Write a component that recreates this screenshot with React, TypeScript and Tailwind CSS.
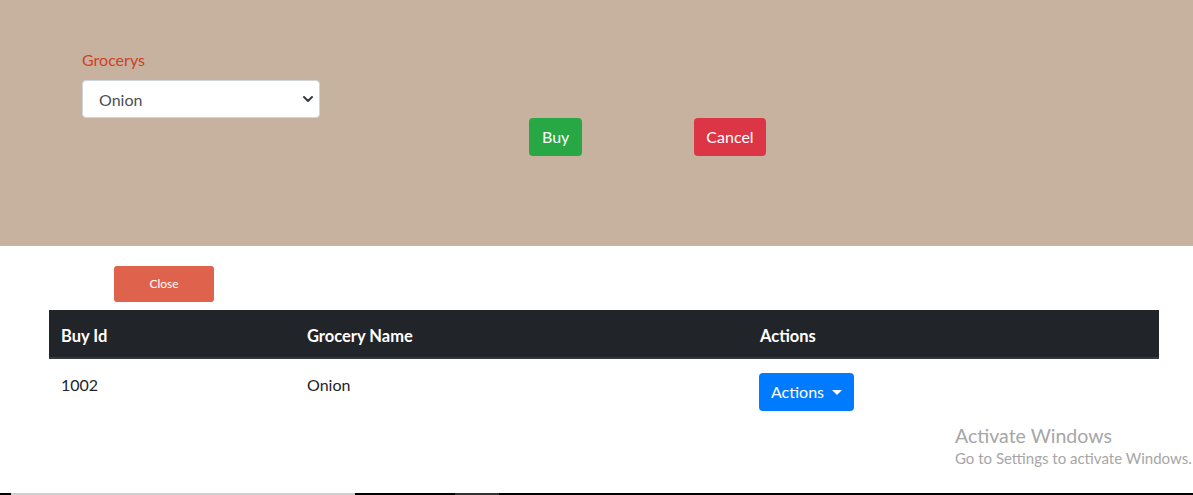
import { ChevronDown } from "lucide-react"

const App = () => {
  return (
    <div className="relative h-[495px] overflow-hidden bg-white font-['Lato','Noto_Sans',sans-serif] text-[#212529]">
      <div className="h-[246px] bg-[#c6b29f] pl-[82px] pt-[48px] flex items-start">
        <div className="w-[238px] flex flex-col">
          <label className="text-[16px] leading-6 text-[#cf4029]">Grocerys</label>
          <div className="relative mt-[8px]">
            <select className="appearance-none w-full h-[38px] rounded border border-[#ced4da] bg-white pl-4 pt-[2px] text-[16px] text-[#495057] outline-none">
              <option>Onion</option>
            </select>
            <ChevronDown size={16} strokeWidth={3} className="absolute right-[4px] top-[11px] text-[#343a40] pointer-events-none" />
          </div>
        </div>
        <div className="ml-[209px] mt-[70px] flex gap-[112px]">
          <button className="h-[38px] px-[13px] rounded bg-[#28a745] text-white text-[16px]">Buy</button>
          <button className="h-[38px] px-[12px] rounded bg-[#dc3545] text-white text-[16px]">Cancel</button>
        </div>
      </div>

      <button className="ml-[114px] mt-[20px] w-[100px] h-[36px] rounded-[3px] bg-[#df634c] text-white text-[12px]">Close</button>

      <table className="ml-[49px] mt-[8px] w-[1110px] border-collapse text-left text-[16.5px]">
        <thead>
          <tr className="bg-[#212529] text-white border-b-2 border-[#32383e]">
            <th className="w-[246px] px-3 pt-[5px] h-[48px] font-bold">Buy Id</th>
            <th className="w-[453px] px-3 pt-[5px] font-bold">Grocery Name</th>
            <th className="px-3 pt-[5px] font-bold">Actions</th>
          </tr>
        </thead>
        <tbody>
          <tr>
            <td className="px-3 pt-[14px] pb-3 align-top leading-6 text-[16px]">1002</td>
            <td className="px-3 pt-[14px] pb-3 align-top leading-6 text-[16px]">Onion</td>
            <td className="px-[11px] pt-[14px] pb-3 align-top">
              <button className="h-[38px] px-3 rounded bg-[#007bff] text-white text-[16px] flex items-center gap-2">
                Actions
                <span className="w-0 h-0 border-x-[5px] border-x-transparent border-t-[5px] border-t-white"></span>
              </button>
            </td>
          </tr>
        </tbody>
      </table>

      <div className="absolute left-[955px] top-[422px] text-[#a6a6a6] pointer-events-none">
        <div className="text-[19.5px] leading-7">Activate Windows</div>
        <div className="text-[15px] leading-5 -mt-[2px]">Go to Settings to activate Windows.</div>
      </div>

      <div className="absolute bottom-0 left-0 w-full h-[2px] bg-black">
        <div className="absolute left-[11px] w-[344px] h-[2px] bg-[#d0d0d0]"></div>
        <div className="absolute left-[455px] w-[44px] h-[2px] bg-[#333]"></div>
      </div>
    </div>
  )
}

export default App
